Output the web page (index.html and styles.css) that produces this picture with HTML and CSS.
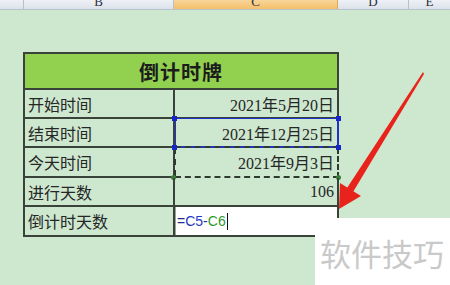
FILE: index.html
```html
<!DOCTYPE html>
<html>
<head>
<meta charset="utf-8">
<link rel="stylesheet" href="styles.css">
</head>
<body>
<div class="page">
  <div class="colheads">
    <div class="ch ch-corner"></div>
    <div class="ch ch-b"><span>B</span></div>
    <div class="ch ch-c"><span>C</span></div>
    <div class="ch ch-d"><span>D</span></div>
    <div class="ch ch-e"><span>E</span></div>
  </div>

  <div class="sheet">
    <div class="title">倒计时牌</div>

    <div class="cell label r29">开始时间</div>
    <div class="cell value r29">2021年5月20日</div>

    <div class="cell label r29">结束时间</div>
    <div class="cell value r29 sel">2021年12月25日
      <i class="h h-tl"></i><i class="h h-tr"></i><i class="h h-bl"></i><i class="h h-br"></i>
    </div>

    <div class="cell label r30">今天时间</div>
    <div class="cell value r30 ants">2021年9月3日
      <i class="g g-bl"></i><i class="g g-br"></i>
    </div>

    <div class="cell label r29">进行天数</div>
    <div class="cell value r29">106</div>

    <div class="cell label r30">倒计时天数</div>
    <div class="cell active r30"><span class="eq">=</span><span class="ref1">C5</span><span class="eq">-</span><span class="ref2">C6</span><span class="caret"></span></div>
  </div>

  <svg class="arrow" width="450" height="285" viewBox="0 0 450 285">
    <polygon points="423,72 424,74 353,192 347,188" fill="#e8231c"/>
    <polygon points="339,209 340,183 361,196" fill="#e8231c"/>
  </svg>

  <div class="watermark">软件技巧</div>
</div>
</body>
</html>
```

FILE: styles.css
```css
* { box-sizing: border-box; }
html, body { margin: 0; padding: 0; }
body {
  width: 450px;
  height: 285px;
  overflow: hidden;
  background: #cde8cf;
  font-family: "Noto Sans CJK SC", sans-serif;
}
.page {
  position: relative;
  width: 450px;
  height: 285px;
}
.colheads {
  display: flex;
  height: 10px;
  border-bottom: 1px solid #b9c3cf;
}
.ch {
  height: 100%;
  overflow: hidden;
  display: flex;
  justify-content: center;
  align-items: flex-end;
  background: linear-gradient(#eef1f6, #dde2ea);
  border-right: 1px solid #b7bfca;
}
.ch span {
  font-family: "Liberation Serif", serif;
  font-size: 13px;
  line-height: 13px;
  margin-bottom: 1px;
  color: #2a2f3a;
}
.ch-corner { width: 24px; }
.ch-b { width: 150px; }
.ch-c { width: 164px; background: linear-gradient(#f9d59a, #f4c06a); border-right-color: #e0a850; }
.ch-d { width: 71px; }
.ch-e { flex: 1; border-right: none; }

.sheet {
  margin: 42px 0 0 23px;
  width: 316px;
  display: grid;
  grid-template-columns: 150px 164px;
  border-left: 2px solid #3a433a;
  border-top: 2px solid #3a433a;
}
.title {
  grid-column: 1 / 3;
  height: 36px;
  background: #92d050;
  border-right: 2px solid #3a433a;
  border-bottom: 2px solid #3a433a;
  display: flex;
  align-items: center;
  justify-content: center;
  font-size: 20px;
  font-weight: bold;
  color: #1c1c1c;
  letter-spacing: 1px;
}
.cell {
  position: relative;
  border-right: 2px solid #3a433a;
  border-bottom: 2px solid #3a433a;
  display: flex;
  align-items: center;
  font-size: 16px;
  color: #262626;
}
.r29 { height: 29px; }
.r30 { height: 30px; }
.label { padding-left: 3px; }
.value {
  justify-content: flex-end;
  padding-right: 3px;
  font-family: "Liberation Serif", "Noto Sans CJK SC", serif;
}
.sel {
  border-top: 1px solid #1f35c8;
  border-right-color: #1f35c8;
  border-bottom-color: #1f35c8;
  margin-top: -1px;
  height: 30px;
  box-shadow: inset 1px 0 0 #1f35c8;
}
.h {
  position: absolute;
  width: 5px;
  height: 5px;
  background: #1626c8;
  z-index: 2;
}
.h-tl { left: -3px; top: -3px; }
.h-tr { right: -4px; top: -3px; }
.h-bl { left: -3px; bottom: -4px; }
.h-br { right: -4px; bottom: -4px; }
.ants {
  border-right: 2px dashed #2e3a2e;
  border-bottom: 2px dashed #2e3a2e;
  box-shadow: inset 1px 0 0 #cde8cf;
}
.ants::before {
  content: "";
  position: absolute;
  left: -1px;
  top: 0;
  bottom: 0;
  border-left: 2px dashed #2e3a2e;
}
.ants::after {
  content: "";
  position: absolute;
  left: 0;
  right: -2px;
  top: -2px;
  border-top: 2px dashed #2e3a2e;
  z-index: 1;
}
.g {
  position: absolute;
  width: 5px;
  height: 5px;
  border-radius: 50%;
  background: #3b7f3b;
}
.g-bl { left: -4px; bottom: -4px; }
.g-br { right: -4px; bottom: -4px; }
.active {
  background: #ffffff;
  padding-left: 2px;
  font-family: "Liberation Sans", sans-serif;
  font-size: 14px;
  box-shadow: inset 1px 0 0 #9aa39a;
}
.eq { color: #1f2b8a; }
.ref1 { color: #2438c4; }
.ref2 { color: #2e9a2e; }
.caret {
  display: inline-block;
  width: 1px;
  height: 17px;
  background: #111;
  margin-left: 1px;
}
.arrow {
  position: absolute;
  left: 0;
  top: 0;
  pointer-events: none;
}
.watermark {
  position: absolute;
  left: 315px;
  top: 218px;
  right: 0;
  bottom: 0;
  background: #ffffff;
  color: #c9c9c9;
  font-size: 31px;
  line-height: 1;
  padding: 19px 0 0 5px;
  white-space: nowrap;
  letter-spacing: 0;
}
```
